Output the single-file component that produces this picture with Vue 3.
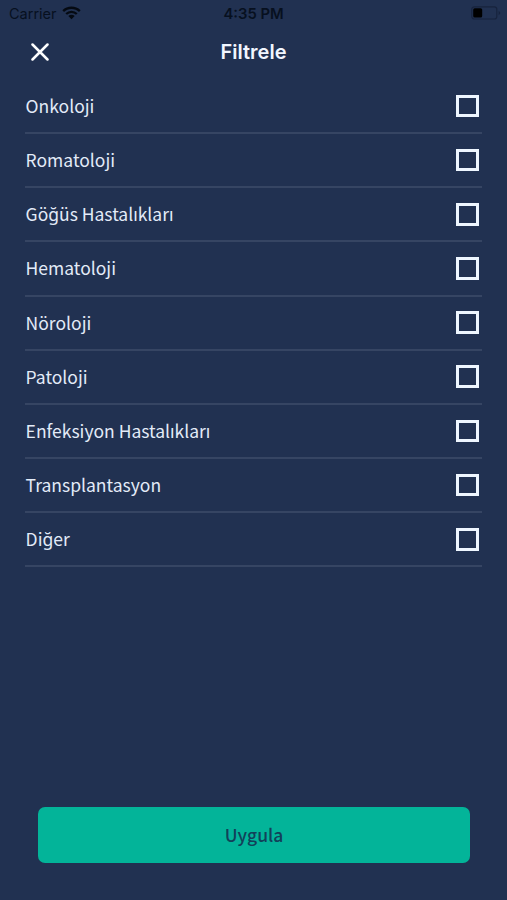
<script setup>
import { ref } from 'vue'

const names = [
  'Onkoloji',
  'Romatoloji',
  'Göğüs Hastalıkları',
  'Hematoloji',
  'Nöroloji',
  'Patoloji',
  'Enfeksiyon Hastalıkları',
  'Transplantasyon',
  'Diğer',
]
const selected = ref([])
</script>

<template>
  <main class="screen">
    <div class="status">
      <div class="carrier">
        <span>Carrier</span>
        <svg class="wifi" width="19" height="14" viewBox="0 0 19 14">
          <path d="M1.2 5.1C5.7.6 13.3.6 17.8 5.1" />
          <path d="M4.2 8C7.2 5.1 11.8 5.1 14.8 8" />
          <path class="dot" d="M6.3 10Q9.5 7.3 12.7 10L9.5 13.3Z" />
        </svg>
      </div>
      <span class="time">4:35 PM</span>
      <svg class="battery" width="30" height="14" viewBox="0 0 30 14">
        <rect class="shell" x=".8" y=".8" width="25" height="12.2" rx="2.5" />
        <rect x="2.2" y="2.3" width="9" height="9.2" rx="1.5" />
        <path class="tip" d="M27.6 4.7Q31 7 27.6 9.2Z" />
      </svg>
    </div>

    <header class="header">
      <button class="close" aria-label="Kapat">
        <svg width="18" height="18" viewBox="0 0 18 18">
          <path d="M1.5 1.5L16.5 16.5M16.5 1.5L1.5 16.5" />
        </svg>
      </button>
      <h1>Filtrele</h1>
    </header>

    <div class="list">
      <label v-for="name in names" :key="name" class="row">
        <span class="name">{{ name }}</span>
        <input v-model="selected" class="box" type="checkbox" :value="name" />
      </label>
    </div>

    <button class="apply"><span>Uygula</span></button>
  </main>
</template>

<style>
body {
  background: #213151;
}
</style>

<style scoped>
.screen {
  box-sizing: border-box;
  height: 900px;
  display: flex;
  flex-direction: column;
  background: #213151;
  font-family: "Noto Sans CJK SC", "Noto Sans", sans-serif;
}
button {
  border: 0;
  padding: 0;
  background: none;
  font-family: inherit;
}
.status {
  height: 27px;
  display: grid;
  grid-template-columns: 1fr auto 1fr;
  align-items: center;
  padding: 0 6px 0 9px;
  font-family: Inter, sans-serif;
  font-size: 14.5px;
  color: #07101f;
}
.carrier {
  display: flex;
  align-items: center;
  gap: 5px;
}
.wifi {
  margin-top: -1px;
  fill: none;
  stroke: #050a12;
  stroke-width: 2.3;
}
.wifi .dot {
  fill: #050a12;
  stroke: none;
}
.time {
  margin-right: 3px;
  font-size: 14.8px;
  font-weight: 600;
}
.battery {
  justify-self: end;
  margin-top: -1px;
  fill: #000;
}
.battery .shell {
  fill: none;
  stroke: #17233d;
  stroke-width: 1.2;
}
.battery .tip {
  fill: #17233d;
}
.header {
  height: 50px;
  display: grid;
  grid-template-columns: 80px 1fr 80px;
  align-items: center;
}
.close {
  display: flex;
  justify-content: center;
}
.close path {
  stroke: #fff;
  stroke-width: 2.5;
  stroke-linecap: round;
}
h1 {
  margin: 0;
  text-align: center;
  font: 600 20px/24px Inter, sans-serif;
  color: #f1f6ff;
}
.list {
  display: flex;
  flex-direction: column;
  padding: 2.9px 25px 0;
}
.row {
  box-sizing: border-box;
  height: 54.16px;
  display: flex;
  align-items: center;
  justify-content: space-between;
  border-bottom: 2px solid #364563;
  padding: 0 3px 0 .6px;
}
.name {
  font-size: 17.5px;
  line-height: 26px;
  color: #e3ebf8;
}
.box {
  appearance: none;
  box-sizing: border-box;
  width: 22.6px;
  height: 22.6px;
  margin: 0;
  border: 3px solid #eef6ff;
}
.apply {
  height: 56px;
  margin: auto 37px 37px 38px;
  border-radius: 7px;
  background: #03b499;
  font-size: 17.5px;
  font-weight: 500;
  color: #124159;
}
.apply span {
  display: block;
  padding-bottom: 1px;
}
</style>
